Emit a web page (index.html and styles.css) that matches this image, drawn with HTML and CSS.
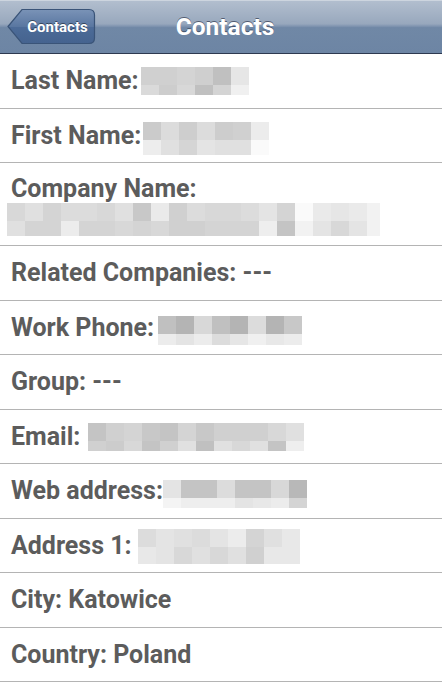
FILE: index.html
```html
<!DOCTYPE html>
<html>
<head>
<meta charset="utf-8">
<link rel="stylesheet" href="styles.css">
</head>
<body>
<header class="bar">
  <div class="bar-left">
    <a class="back">
      <svg class="back-shape" width="89" height="37" viewBox="0 0 89 37">
        <defs>
          <linearGradient id="bg" x1="0" y1="0" x2="0" y2="1">
            <stop offset="0" stop-color="#7a93b7"/>
            <stop offset="0.5" stop-color="#5a77a1"/>
            <stop offset="0.51" stop-color="#4c6b98"/>
            <stop offset="1" stop-color="#45638f"/>
          </linearGradient>
        </defs>
        <path d="M1 18.5 L15 1.5 H82 Q87.5 1.5 87.5 7 V30 Q87.5 35.5 82 35.5 H15 Z" fill="url(#bg)" stroke="#3a5478" stroke-width="1.2"/>
      </svg>
      <span class="back-text">Contacts</span>
    </a>
  </div>
  <h1 class="title">Contacts</h1>
  <div class="bar-right"></div>
</header>
<main class="list">
  <div class="row">
    <span class="label">Last Name:</span>
    <span class="blur" style="--cols:6;--r2:10px;--dy:1px">
      <i style="background:#d0d0d0"></i><i style="background:#d0d0d0"></i><i style="background:#d4d4d4"></i><i style="background:#cfcfcf"></i><i style="background:#c0c0c0"></i><i style="background:#e6e6e6"></i>
      <i style="background:#dadada"></i><i style="background:#cdcdcd"></i><i style="background:#d8d8d8"></i><i style="background:#c0c0c0"></i><i style="background:#d4d4d4"></i><i style="background:#f0f0f0"></i>
    </span>
  </div>
  <div class="row">
    <span class="label">First Name:</span>
    <span class="blur" style="--cols:7;--r2:15px;--dy:1px">
      <i style="background:#cbcbcb"></i><i style="background:#dcdcdc"></i><i style="background:#cecece"></i><i style="background:#dcdcdc"></i><i style="background:#cdcdcd"></i><i style="background:#d0d0d0"></i><i style="background:#ececec"></i>
      <i style="background:#ededed"></i><i style="background:#e0e0e0"></i><i style="background:#d5d5d5"></i><i style="background:#e4e4e4"></i><i style="background:#e0e0e0"></i><i style="background:#e0e0e0"></i><i style="background:#fafafa"></i>
    </span>
  </div>
  <div class="row stack">
    <span class="label">Company Name:</span>
    <span class="blur wide" style="--cols:21;--r2:15px">
      <i style="background:#d8d8d8"></i><i style="background:#e0e0e0"></i><i style="background:#d4d4d4"></i><i style="background:#dcdcdc"></i><i style="background:#dcdcdc"></i><i style="background:#d8d8d8"></i><i style="background:#e0e0e0"></i><i style="background:#c8c8c8"></i><i style="background:#eaeaea"></i><i style="background:#d0d0d0"></i><i style="background:#dcdcdc"></i><i style="background:#d8d8d8"></i><i style="background:#d8d8d8"></i><i style="background:#dcdcdc"></i><i style="background:#e4e4e4"></i><i style="background:#d4d4d4"></i><i style="background:#fafafa"></i><i style="background:#eaeaea"></i><i style="background:#e6e6e6"></i><i style="background:#eaeaea"></i><i style="background:#f2f2f2"></i>
      <i style="background:#e0e0e0"></i><i style="background:#d4d4d4"></i><i style="background:#d4d4d4"></i><i style="background:#ececec"></i><i style="background:#d4d4d4"></i><i style="background:#d4d4d4"></i><i style="background:#d8d8d8"></i><i style="background:#d4d4d4"></i><i style="background:#d8d8d8"></i><i style="background:#d0d0d0"></i><i style="background:#d0d0d0"></i><i style="background:#d4d4d4"></i><i style="background:#d4d4d4"></i><i style="background:#d4d4d4"></i><i style="background:#eeeeee"></i><i style="background:#c4c4c4"></i><i style="background:#f2f2f2"></i><i style="background:#e4e4e4"></i><i style="background:#d8d8d8"></i><i style="background:#e4e4e4"></i><i style="background:#f2f2f2"></i>
    </span>
  </div>
  <div class="row">
    <span class="label">Related Companies: ---</span>
  </div>
  <div class="row">
    <span class="label">Work Phone:</span>
    <span class="blur sp" style="--cols:8;--r2:11px;--dy:3px">
      <i style="background:#c0c0c0"></i><i style="background:#b4b4b4"></i><i style="background:#d8d8d8"></i><i style="background:#c0c0c0"></i><i style="background:#b4b4b4"></i><i style="background:#dcdcdc"></i><i style="background:#b4b4b4"></i><i style="background:#c8c8c8"></i>
      <i style="background:#ececec"></i><i style="background:#e4e4e4"></i><i style="background:#ececec"></i><i style="background:#dcdcdc"></i><i style="background:#e6e6e6"></i><i style="background:#f0f0f0"></i><i style="background:#e8e8e8"></i><i style="background:#ececec"></i>
    </span>
  </div>
  <div class="row">
    <span class="label">Group: ---</span>
  </div>
  <div class="row">
    <span class="label">Email:</span>
    <span class="blur sp2" style="--cols:12;--r2:10px;--dy:1px">
      <i style="background:#c4c4c4"></i><i style="background:#d0d0d0"></i><i style="background:#d4d4d4"></i><i style="background:#c8c8c8"></i><i style="background:#c4c4c4"></i><i style="background:#d4d4d4"></i><i style="background:#c8c8c8"></i><i style="background:#d0d0d0"></i><i style="background:#d0d0d0"></i><i style="background:#d0d0d0"></i><i style="background:#d8d8d8"></i><i style="background:#e0e0e0"></i>
      <i style="background:#d0d0d0"></i><i style="background:#cccccc"></i><i style="background:#d8d8d8"></i><i style="background:#c4c4c4"></i><i style="background:#d0d0d0"></i><i style="background:#e0e0e0"></i><i style="background:#c0c0c0"></i><i style="background:#e0e0e0"></i><i style="background:#d8d8d8"></i><i style="background:#e0e0e0"></i><i style="background:#c4c4c4"></i><i style="background:#eeeeee"></i>
    </span>
  </div>
  <div class="row">
    <span class="label">Web address:</span>
    <span class="blur tight" style="--cols:8;--r2:10px;--dy:4px">
      <i style="background:#e4e4e4"></i><i style="background:#c4c4c4"></i><i style="background:#c4c4c4"></i><i style="background:#dcdcdc"></i><i style="background:#c4c4c4"></i><i style="background:#c4c4c4"></i><i style="background:#d8d8d8"></i><i style="background:#b8b8b8"></i>
      <i style="background:#f4f4f4"></i><i style="background:#eeeeee"></i><i style="background:#eeeeee"></i><i style="background:#eeeeee"></i><i style="background:#e4e4e4"></i><i style="background:#e8e8e8"></i><i style="background:#ececec"></i><i style="background:#d4d4d4"></i>
    </span>
  </div>
  <div class="row">
    <span class="label">Address 1:</span>
    <span class="blur sp3" style="--cols:9;--r2:17px;--dy:-2px">
      <i style="background:#dcdcdc"></i><i style="background:#e4e4e4"></i><i style="background:#e0e0e0"></i><i style="background:#dcdcdc"></i><i style="background:#e4e4e4"></i><i style="background:#ececec"></i><i style="background:#d4d4d4"></i><i style="background:#e0e0e0"></i><i style="background:#e8e8e8"></i>
      <i style="background:#e8e8e8"></i><i style="background:#e4e4e4"></i><i style="background:#d8d8d8"></i><i style="background:#e0e0e0"></i><i style="background:#d8d8d8"></i><i style="background:#e0e0e0"></i><i style="background:#d0d0d0"></i><i style="background:#e8e8e8"></i><i style="background:#e8e8e8"></i>
    </span>
  </div>
  <div class="row">
    <span class="label">City: Katowice</span>
  </div>
  <div class="row">
    <span class="label">Country: Poland</span>
  </div>
</main>
</body>
</html>
```

FILE: styles.css
```css
* { box-sizing: border-box; }
html, body { margin: 0; padding: 0; background: #fff; }
body { font-family: Roboto, "Liberation Sans", sans-serif; overflow: hidden; }

.bar {
  height: 54px;
  display: grid;
  grid-template-columns: 1fr auto 1fr;
  align-items: center;
  background: linear-gradient(#b3bfcf 0%, #98a8bd 45%, #7d92ae 50%, #7088a6 52%, #6d85a4 100%);
  border-bottom: 1px solid #2d3950;
  box-shadow: inset 0 1px 0 #cdd5df;
}
.bar-left { display: flex; align-items: center; padding-left: 7px; }
.back {
  position: relative;
  width: 89px;
  height: 37px;
  display: flex;
  align-items: center;
  justify-content: center;
  padding-left: 14px;
  padding-right: 2px;
}
.back-shape { position: absolute; left: 0; top: 0; }
.back-text {
  position: relative;
  color: #fff;
  font-weight: 700;
  font-size: 15px;
  text-shadow: 0 -1px 0 rgba(0,0,0,0.45);
}
.title {
  margin: 0;
  padding-left: 8px;
  color: #fff;
  font-size: 24.5px;
  font-weight: 700;
  text-shadow: 0 -1px 0 rgba(30,40,60,0.6);
}

.row {
  display: flex;
  align-items: flex-start;
  height: 54.5px;
  padding: 12px 11px 0 11px;
  border-bottom: 1px solid #b4b4b4;
}
.row.stack {
  flex-direction: column;
  height: 83px;
  padding-top: 11px;
  padding-left: 7px;
}
.row.stack .label { padding-left: 4px; }
.label {
  font-size: 25px;
  line-height: 29px;
  font-weight: 700;
  color: #5c5c5c;
  white-space: nowrap;
}
.blur {
  display: grid;
  flex: none;
  grid-template-columns: repeat(var(--cols), 18px);
  grid-template-rows: 18px var(--r2);
  margin-top: var(--dy, 0px);
  margin-left: 2px;
}
.blur.tight { margin-left: 0; }
.blur.sp { margin-left: 4px; }
.blur.sp2 { margin-left: 8px; }
.blur.sp3 { margin-left: 6px; }
.blur.wide { grid-template-columns: repeat(20, 18px) 13px; margin: 0; }
.blur i { display: block; }
```
